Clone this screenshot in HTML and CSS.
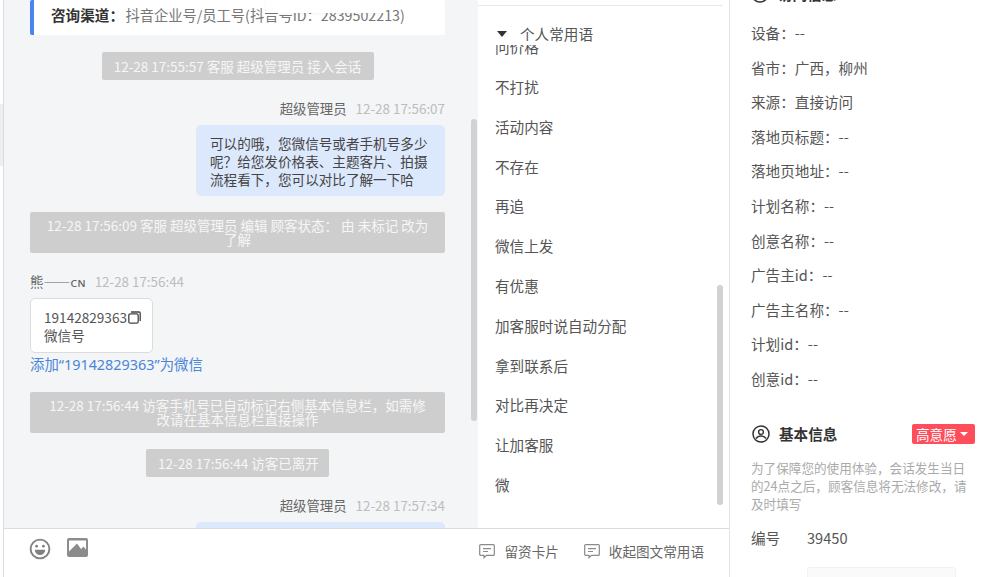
FILE: index.html
```html
<!DOCTYPE html>
<html lang="zh">
<head>
<meta charset="utf-8">
<title>会话</title>
<link rel="stylesheet" href="styles.css">
</head>
<body>
<div class="app">
  <aside class="rail"><div class="rail-mark"></div></aside>
  <main class="workspace">
    <div class="panes">
      <section class="chat">
        <div class="channel"><b>咨询渠道：</b>抖音企业号/员工号(抖音号ID：2839502213)</div>
        <div class="popover"></div>
        <div class="sys sys-a">12-28 17:55:57 客服 超级管理员 接入会话</div>
        <div class="meta meta-right meta-a"><span class="who">超级管理员</span><span class="when">12-28 17:56:07</span></div>
        <div class="bubble">可以的哦，您微信号或者手机号多少呢？给您发价格表、主题客片、拍摄流程看下，您可以对比了解一下哈</div>
        <div class="sys sys-wide">12-28 17:56:09 客服 超级管理员 编辑 顾客状态： 由 未标记 改为 了解</div>
        <div class="meta meta-a"><span class="who">熊——ᴄɴ</span><span class="when">12-28 17:56:44</span></div>
        <div class="wx-card">
          <div class="wx-num">19142829363<svg class="copy" viewBox="0 0 13 13"><rect x="0.8" y="2.8" width="9.4" height="9.4" rx="1.5" fill="none" stroke="#444" stroke-width="1.3"/><path d="M3 1h8a1.2 1.2 0 0 1 1.2 1.2V10" fill="none" stroke="#444" stroke-width="1.3"/></svg></div>
          <div class="wx-label">微信号</div>
        </div>
        <a class="wx-link">添加“19142829363”为微信</a>
        <div class="sys sys-wide sys-c">12-28 17:56:44 访客手机号已自动标记右侧基本信息栏，如需修改请在基本信息栏直接操作</div>
        <div class="sys sys-d">12-28 17:56:44 访客已离开</div>
        <div class="meta meta-right meta-a"><span class="who">超级管理员</span><span class="when">12-28 17:57:34</span></div>
        <div class="bubble bubble-cut"></div>
        <div class="scroll scroll-chat"></div>
      </section>
      <section class="phrases">
        <div class="phrases-rule"></div>
        <div class="phrases-head"><span class="caret"></span>个人常用语</div>
        <ul class="phrase-list">
          <li>问价格</li>
          <li>不打扰</li>
          <li>活动内容</li>
          <li>不存在</li>
          <li>再追</li>
          <li>微信上发</li>
          <li>有优惠</li>
          <li>加客服时说自动分配</li>
          <li>拿到联系后</li>
          <li>对比再决定</li>
          <li>让加客服</li>
          <li>微</li>
        </ul>
        <div class="scroll scroll-phrases"></div>
      </section>
    </div>
    <footer class="composer">
      <svg class="tool-smile" viewBox="0 0 22 22"><circle cx="11" cy="11" r="9.4" fill="none" stroke="#808080" stroke-width="1.9"/><circle cx="7.6" cy="8.2" r="1.4" fill="#808080"/><circle cx="14.4" cy="8.2" r="1.4" fill="#808080"/><path d="M5.8 11.8h10.4a5.2 5.2 0 0 1-10.4 0z" fill="#808080"/></svg>
      <svg class="tool-image" viewBox="0 0 21 19"><rect width="21" height="19" rx="2" fill="#8c8c8c"/><path d="M2 2.500h17v9l-2.500-3-2.500 2.500-4-5.500-8 8z" fill="#fff"/></svg>
      <div class="composer-actions">
        <span class="action"><svg class="msg" viewBox="0 0 16 15"><path d="M1.600.7h12.800a.9.9 0 0 1 .9.9v8.800a.9.9 0 0 1-.9.9H7.500L5 13.600v-2.300H1.600a.9.9 0 0 1-.9-.9V1.600a.9.9 0 0 1 .9-.9z" fill="none" stroke="#8a8a8a" stroke-width="1.2"/><path d="M4 4.600h8M4 7.500h5" stroke="#8a8a8a" stroke-width="1.2"/></svg>留资卡片</span>
        <span class="action"><svg class="msg" viewBox="0 0 16 15"><path d="M1.600.7h12.800a.9.9 0 0 1 .9.9v8.800a.9.9 0 0 1-.9.9H7.500L5 13.600v-2.300H1.600a.9.9 0 0 1-.9-.9V1.600a.9.9 0 0 1 .9-.9z" fill="none" stroke="#8a8a8a" stroke-width="1.2"/><path d="M4 4.600h8M4 7.500h5" stroke="#8a8a8a" stroke-width="1.2"/></svg>收起图文常用语</span>
      </div>
    </footer>
  </main>
  <aside class="info">
    <h3 class="info-head info-head-cut"><svg class="person" viewBox="0 0 18 18"><circle cx="9" cy="9" r="8" fill="none" stroke="#333" stroke-width="1.5"/></svg>访问信息</h3>
    <dl class="fields">
      <div class="field">设备：--</div>
      <div class="field">省市：广西，柳州</div>
      <div class="field">来源：直接访问</div>
      <div class="field">落地页标题：--</div>
      <div class="field">落地页地址：--</div>
      <div class="field">计划名称：--</div>
      <div class="field">创意名称：--</div>
      <div class="field">广告主id：--</div>
      <div class="field">广告主名称：--</div>
      <div class="field">计划id：--</div>
      <div class="field">创意id：--</div>
    </dl>
    <div class="basic-head">
      <h3 class="info-head"><svg class="person" viewBox="0 0 18 18"><circle cx="9" cy="9" r="8" fill="none" stroke="#333" stroke-width="1.5"/><circle cx="9" cy="7" r="2.400" fill="none" stroke="#333" stroke-width="1.4"/><path d="M4 13.500c1.200-1.900 3-2.600 5-2.600s3.800.7 5 2.600" fill="none" stroke="#333" stroke-width="1.500"/></svg>基本信息</h3>
      <span class="tag">高意愿<i class="tag-caret"></i></span>
    </div>
    <p class="notice">为了保障您的使用体验，会话发生当日的24点之后，顾客信息将无法修改，请及时填写</p>
    <div class="id-row"><span class="id-key">编号</span><span>39450</span></div>
    <div class="input-row"><div class="input-stub"></div></div>
  </aside>
</div>
</body>
</html>
```
FILE: styles.css
```css
* { box-sizing: border-box; }
html, body { margin: 0; height: 100%; overflow: hidden; background: #fff; }
body { font-family: "Noto Sans CJK SC", "Noto Sans", sans-serif; color: #555; }
.app { display: flex; width: 994px; height: 577px; overflow: hidden; }

.rail { width: 4px; flex: none; border-right: 1px solid #dcdcdc; padding-top: 104px; }
.rail-mark { width: 3px; height: 62px; background: #eeeeee; }

.workspace { width: 726px; flex: none; display: flex; flex-direction: column; border-right: 1px solid #e4e4e4; }
.panes { display: flex; height: 528px; flex: none; }

.chat { position: relative; width: 474px; flex: none; background: #f4f5f7; padding: 0 33px 0 26px; display: flex; flex-direction: column; overflow: hidden; }
.channel { height: 35px; flex: none; background: #fff; border-left: 4px solid #4a84f0; border-radius: 2px; padding: 5px 0 0 17px; font-size: 14.25px; line-height: 20px; color: #777; white-space: nowrap; }
.channel b { color: #333; font-size: 14.6px; font-weight: 700; margin-right: 1.5px; }
.popover { position: absolute; left: 262px; top: 0; width: 119px; height: 13px; background: #fff; box-shadow: 0 1px 3px rgba(0,0,0,.05); }

.sys { background: #cecece; color: #f6f6f6; font-size: 13.5px; line-height: 14px; padding: 7px 12px; border-radius: 2px; text-align: center; align-self: center; flex: none; }
.sys-a { margin-top: 17px; width: 272px; white-space: nowrap; }
.sys-wide { margin-top: 16px; width: 415px; padding-left: 14px; padding-right: 14px; line-height: 13.5px; }
.sys-c { margin-top: 17px; }
.sys-d { margin-top: 16px; width: 183px; white-space: nowrap; }

.meta { display: flex; gap: 9px; height: 20px; font-size: 13.4px; line-height: 19px; flex: none; }
.meta-right { justify-content: flex-end; }
.meta-a { margin-top: 19px; }
.who { color: #666; }
.when { color: #bdbdbd; }

.bubble { align-self: flex-end; width: 249px; height: 71px; flex: none; margin-top: 6px; padding: 9px 14px; background: #dce8fc; border-radius: 5px; font-size: 13.6px; line-height: 18px; color: #444; }
.bubble-cut { height: 40px; }

.wx-card { width: 123px; height: 55px; flex: none; margin-top: 6px; padding: 9px 13px; background: #fff; border: 1px solid #dcdcdc; border-radius: 5px; font-size: 13.6px; line-height: 18px; color: #555; }
.wx-num { display: flex; align-items: center; white-space: nowrap; }
.copy { width: 13px; height: 13px; margin-left: 1px; flex: none; }
.wx-link { display: block; height: 20px; margin-top: 2px; flex: none; font-family: "Noto Sans", "Noto Sans CJK SC", sans-serif; font-size: 14.4px; line-height: 20px; color: #4a86d8; white-space: nowrap; }

.scroll { position: absolute; width: 6px; background: #d2d2d2; border-radius: 3px; }
.scroll-chat { right: 1px; top: 119px; height: 302px; }
.scroll-phrases { right: 6px; top: 285px; height: 220px; }

.phrases { position: relative; width: 251px; flex: none; background: #fff; overflow: hidden; }
.phrases-rule { height: 6px; margin-right: 6px; border-bottom: 1px solid #e8e8e8; }
.phrases-head { height: 39px; padding: 19px 0 3px 19px; font-size: 14.6px; line-height: 22px; color: #555; display: flex; align-items: center; position: relative; z-index: 1; background: #fff; }
.caret { width: 0; height: 0; border: 5.5px solid transparent; border-top: 6px solid #333; border-bottom: 0; margin-right: 13px; }
.phrase-list { list-style: none; margin: -17.6px 0 0; padding: 0 0 0 17px; font-size: 14.6px; color: #555; }
.phrase-list li { height: 39.8px; line-height: 20px; padding-top: 9.800px; white-space: nowrap; }

.composer { height: 49px; flex: none; border-top: 1px solid #dcdcdc; background: #fff; padding: 9px 25px 0 25px; display: flex; align-items: flex-start; }
.tool-smile { width: 22px; height: 22px; flex: none; }
.tool-image { width: 21px; height: 19px; margin-left: 16px; flex: none; }
.composer-actions { margin-left: auto; display: flex; gap: 25px; padding-top: 3px; }
.action { display: flex; align-items: center; font-size: 13.6px; line-height: 20px; color: #666; white-space: nowrap; }
.msg { width: 16px; height: 15px; margin-right: 9px; flex: none; }

.info { flex: 1; min-width: 0; padding: 0 19px 0 21px; overflow: hidden; color: #555; font-size: 14.6px; }
.info-head { margin: 0; display: flex; align-items: center; font-size: 14.6px; line-height: 20px; font-weight: 700; color: #333; }
.info-head-cut { margin-top: -16px; height: 20px; }
.person { width: 18px; height: 18px; margin-right: 9px; flex: none; }
.fields { margin: 11.800px 0 0; }
.field { height: 34.600px; line-height: 20px; padding-top: 7.300px; white-space: nowrap; }
.basic-head { display: flex; align-items: center; justify-content: space-between; margin-top: 27.700px; padding-left: 1px; height: 20px; }
.tag { display: flex; align-items: center; width: 63px; height: 20px; padding-left: 4px; background: #ff4d5b; border-radius: 2px; color: #fff; font-size: 13.6px; line-height: 20px; white-space: nowrap; }
.tag-caret { width: 0; height: 0; margin-left: 3px; border: 4px solid transparent; border-top: 4.500px solid #fff; border-bottom: 0; }
.notice { margin: 15px 0 0; font-size: 12.6px; line-height: 18px; color: #aaa; }
.id-row { display: flex; margin-top: 15px; line-height: 20px; font-size: 14.6px; }
.id-key { width: 56px; flex: none; }
.input-row { margin-top: 19px; padding-left: 56px; }
.input-stub { width: 149px; height: 30px; background: #fafafa; border: 1px solid #f2f2f2; border-radius: 3px; }
```
